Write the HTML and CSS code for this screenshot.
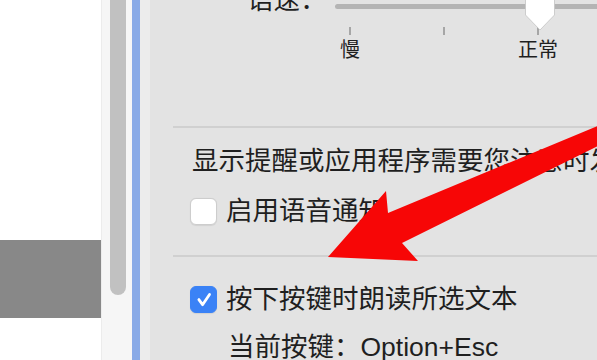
FILE: index.html
```html
<!DOCTYPE html>
<html lang="zh-CN">
<head>
<meta charset="utf-8">
<link rel="stylesheet" href="styles.css">
</head>
<body>
<div class="screen">
  <aside class="sidebar"><div class="sel"></div></aside>
  <div class="scroller"><div class="thumb"></div></div>
  <div class="focus"></div>
  <div class="gutter"></div>
  <main class="panel">
    <div class="speed">
      <div class="speed-label">语速：</div>
      <div class="slider">
        <div class="track">
          <svg class="knob" width="30" height="44" viewBox="0 0 30 44"><path d="M3.5 0.5 H26.5 Q29.5 0.5 29.5 3.5 V25 L15 40 L0.5 25 V3.5 Q0.5 0.5 3.5 0.5 Z" fill="#fff" stroke="#c4c4c4" stroke-width="0.8"/></svg>
        </div>
        <div class="ticks"><i></i><i></i><i></i></div>
        <div class="marks"><span>慢</span><span>正常</span></div>
      </div>
    </div>
    <div class="sep"></div>
    <p class="line text">显示提醒或应用程序需要您注意时发</p>
    <label class="line check-row"><span class="box"></span><span>启用语音通知</span></label>
    <div class="sep sep2"></div>
    <label class="line check-row first"><span class="box on"><svg width="27" height="27" viewBox="0 0 27 27"><path d="M8.5 12.5 L12.5 18 L20 7" fill="none" stroke="#fff" stroke-width="3" stroke-linecap="round" stroke-linejoin="round"/></svg></span><span>按下按键时朗读所选文本</span></label>
    <p class="line sub">当前按键：Option+Esc</p>
  </main>
  <svg class="arrow" width="597" height="360" viewBox="0 0 597 360"><polygon points="600,125 388,213 386,191 328,257 418,261 402,243 600,145" fill="#f70606"/></svg>
</div>
</body>
</html>
```

FILE: styles.css
```css
html, body {
  margin: 0;
  padding: 0;
  width: 597px;
  height: 360px;
  overflow: hidden;
}
body {
  font-family: "Liberation Sans", "Noto Sans CJK SC", sans-serif;
  color: #1f1f1f;
}
.screen {
  position: relative;
  display: flex;
  width: 597px;
  height: 360px;
  overflow: hidden;
}
.sidebar {
  width: 101px;
  flex: none;
  background: #fff;
  display: flex;
  flex-direction: column;
}
.sel {
  margin-top: 240px;
  height: 78px;
  background: #888888;
}
.scroller {
  width: 22px;
  flex: none;
  background: #f6f6f6;
  border-left: 1px solid #ececec;
  padding-left: 8px;
  display: flex;
  flex-direction: column;
}
.thumb {
  width: 16px;
  height: 295px;
  background: #c1c1c1;
  border-radius: 0 0 8px 8px;
}
.focus {
  width: 8px;
  flex: none;
  background: #89aae7;
}
.gutter {
  width: 10px;
  flex: none;
  background: #ececec;
}
.panel {
  flex: 1;
  background: #e3e3e3;
  overflow: hidden;
  display: flex;
  flex-direction: column;
  font-size: 26.5px;
}
.speed {
  display: flex;
  margin-top: -14px;
  padding-left: 97px;
}
.speed-label {
  width: 79.5px;
  height: 28px;
  line-height: 28px;
  white-space: nowrap;
  flex: none;
}
.slider {
  flex: 1;
  margin-left: 8.5px;
  display: flex;
  flex-direction: column;
}
.track {
  position: relative;
  margin-top: 18px;
  height: 5px;
  width: calc(100% + 20px);
  background: #b4b4b4;
  border-radius: 3px;
}
.knob {
  position: absolute;
  left: 190px;
  top: -14px;
}
.ticks {
  display: flex;
  gap: 92px;
  margin-top: 18px;
  padding-left: 14px;
  height: 8px;
}
.ticks i {
  width: 2px;
  height: 8px;
  background: #a6a6a6;
}
.marks {
  display: flex;
  gap: 148px;
  margin-top: 3px;
  margin-left: -5px;
  font-size: 20px;
  line-height: 24px;
  height: 24px;
}
.marks span {
  width: 40px;
  text-align: center;
  white-space: nowrap;
}
.sep {
  margin: 64px 0 0 23px;
  height: 2px;
  background: #d0d0d0;
  flex: none;
}
.line {
  margin: 0;
  height: 34px;
  line-height: 34px;
  white-space: nowrap;
  flex: none;
}
.text {
  margin-top: 16px;
  padding-left: 42px;
}
.check-row {
  display: flex;
  align-items: center;
  margin-top: 16px;
  padding-left: 40px;
  gap: 9px;
}
.box {
  width: 27px;
  height: 27px;
  box-sizing: border-box;
  border-radius: 6px;
  background: #fff;
  border: 1px solid #cdcdcd;
  box-shadow: 0 0.5px 1px rgba(0,0,0,0.08);
  flex: none;
  display: flex;
}
.box.on {
  background: #3a82f6;
  border-color: #3a82f6;
}
.sep2 {
  margin-top: 27px;
}
.check-row.first {
  margin-top: 25px;
}
.sub {
  margin-top: 14px;
  padding-left: 78px;
}
.arrow {
  position: absolute;
  left: 0;
  top: 0;
  pointer-events: none;
}
```
